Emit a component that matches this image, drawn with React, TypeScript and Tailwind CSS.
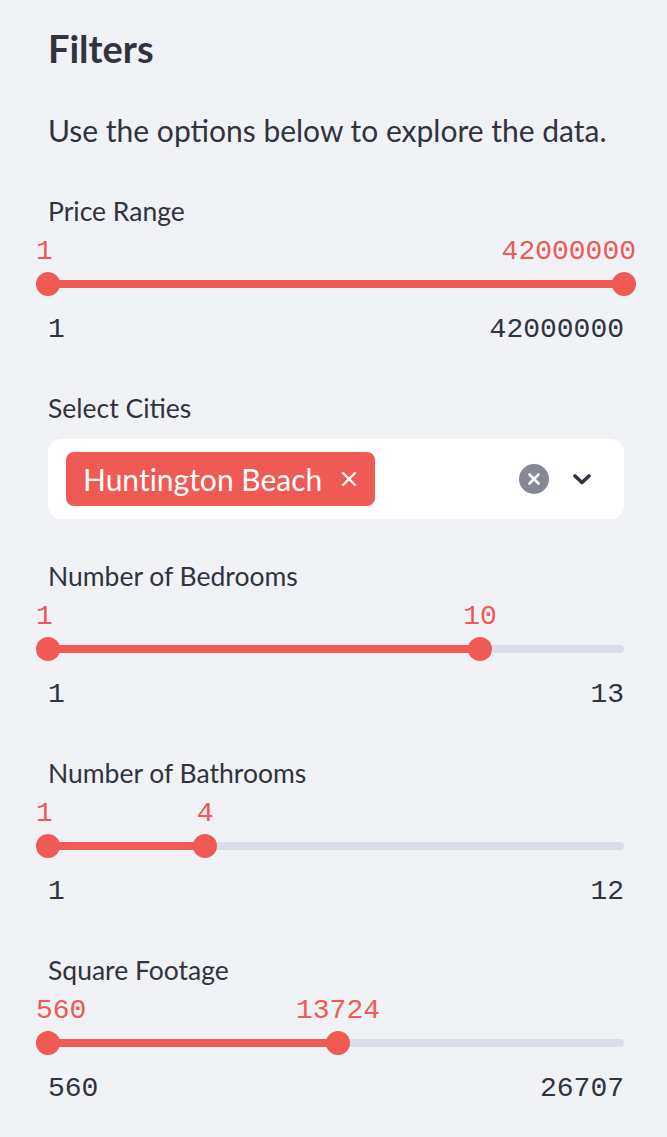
import React from "react";

const RED = "#ef5a55";

interface RangeSliderProps {
  label: string;
  min: number;
  max: number;
  low: number;
  high: number;
}

function RangeSlider({ label, min, max, low, high }: RangeSliderProps) {
  const pct = (v: number) => ((v - min) / (max - min)) * 100;
  const lowPct = pct(low);
  const highPct = pct(high);

  const valueStyle = (p: number): React.CSSProperties => {
    if (p <= 0) return { left: "-12px" };
    if (p >= 100) return { right: "-12px" };
    return { left: `${p}%`, transform: "translateX(-50%)" };
  };

  return (
    <section className="flex flex-col">
      <div className="h-[40px] leading-[40px] text-[26.5px] text-[#31333f]">{label}</div>
      <div className="relative h-[40px] font-['Liberation_Mono',monospace] text-[28px] leading-[40px] text-[#ef5a55]">
        <span className="absolute top-[1px] whitespace-nowrap" style={valueStyle(lowPct)}>
          {low}
        </span>
        <span className="absolute top-[1px] whitespace-nowrap" style={valueStyle(highPct)}>
          {high}
        </span>
      </div>
      <div className="flex h-[26px] items-center">
        <div className="relative h-[8px] w-full rounded-full bg-[#d8dde7]">
          <div
            className="absolute inset-y-0 bg-[#ef5a55]"
            style={{ left: `${lowPct}%`, width: `${highPct - lowPct}%` }}
          />
          {[lowPct, highPct].map((p, i) => (
            <div
              key={i}
              className="absolute top-1/2 h-[24px] w-[24px] -translate-x-1/2 -translate-y-1/2 rounded-full"
              style={{ left: `${p}%`, background: RED }}
            />
          ))}
        </div>
      </div>
      <div className="mt-[13px] flex h-[40px] items-center justify-between font-['Liberation_Mono',monospace] text-[28px] leading-[40px] text-[#31333f]">
        <span>{min}</span>
        <span>{max}</span>
      </div>
    </section>
  );
}

function CitySelect() {
  return (
    <section className="flex flex-col">
      <div className="h-[40px] leading-[40px] text-[26.5px] text-[#31333f]">Select Cities</div>
      <div className="mt-[11px] flex h-[80px] items-center rounded-[14px] bg-white pl-[18px] pr-[31px]">
        <div className="flex h-[54px] items-center gap-[19px] rounded-[8px] bg-[#ef5a55] pl-[17px] pr-[18px] text-[30px] text-white [font-variant-ligatures:none]">
          <span>Huntington Beach</span>
          <svg width="16" height="16" viewBox="0 0 16 16" fill="none" stroke="white" strokeWidth="2.4" strokeLinecap="round">
            <path d="M2 2l12 12M14 2L2 14" />
          </svg>
        </div>
        <div className="ml-auto flex items-center gap-[22px]">
          <svg width="30" height="30" viewBox="0 0 30 30">
            <circle cx="15" cy="15" r="15" fill="#868896" />
            <path d="M10.5 10.5l9 9M19.5 10.5l-9 9" stroke="white" strokeWidth="2.6" strokeLinecap="round" />
          </svg>
          <svg width="22" height="14" viewBox="0 0 22 14" fill="none" stroke="#31333f" strokeWidth="3.6" strokeLinecap="round" strokeLinejoin="round">
            <path d="M4 4l7 6.5L18 4" />
          </svg>
        </div>
      </div>
    </section>
  );
}

export default function App() {
  return (
    <div className="min-h-[1137px] w-[667px] bg-[#f0f2f6] pl-[48px] pr-[43px] pt-[18px] font-['Lato',sans-serif] text-[#31333f]">
      <h2 className="h-[60px] text-[38px] font-bold leading-[60px]">Filters</h2>
      <p className="mt-[32px] h-[40px] text-[30px] leading-[40px]">Use the options below to explore the data.</p>
      <div className="mt-[41px] flex flex-col">
        <RangeSlider label="Price Range" min={1} max={42000000} low={1} high={42000000} />
        <div className="mt-[38px]">
          <CitySelect />
        </div>
        <div className="mt-[37px]">
          <RangeSlider label="Number of Bedrooms" min={1} max={13} low={1} high={10} />
        </div>
        <div className="mt-[38px]">
          <RangeSlider label="Number of Bathrooms" min={1} max={12} low={1} high={4} />
        </div>
        <div className="mt-[38px]">
          <RangeSlider label="Square Footage" min={560} max={26707} low={560} high={13724} />
        </div>
      </div>
    </div>
  );
}
